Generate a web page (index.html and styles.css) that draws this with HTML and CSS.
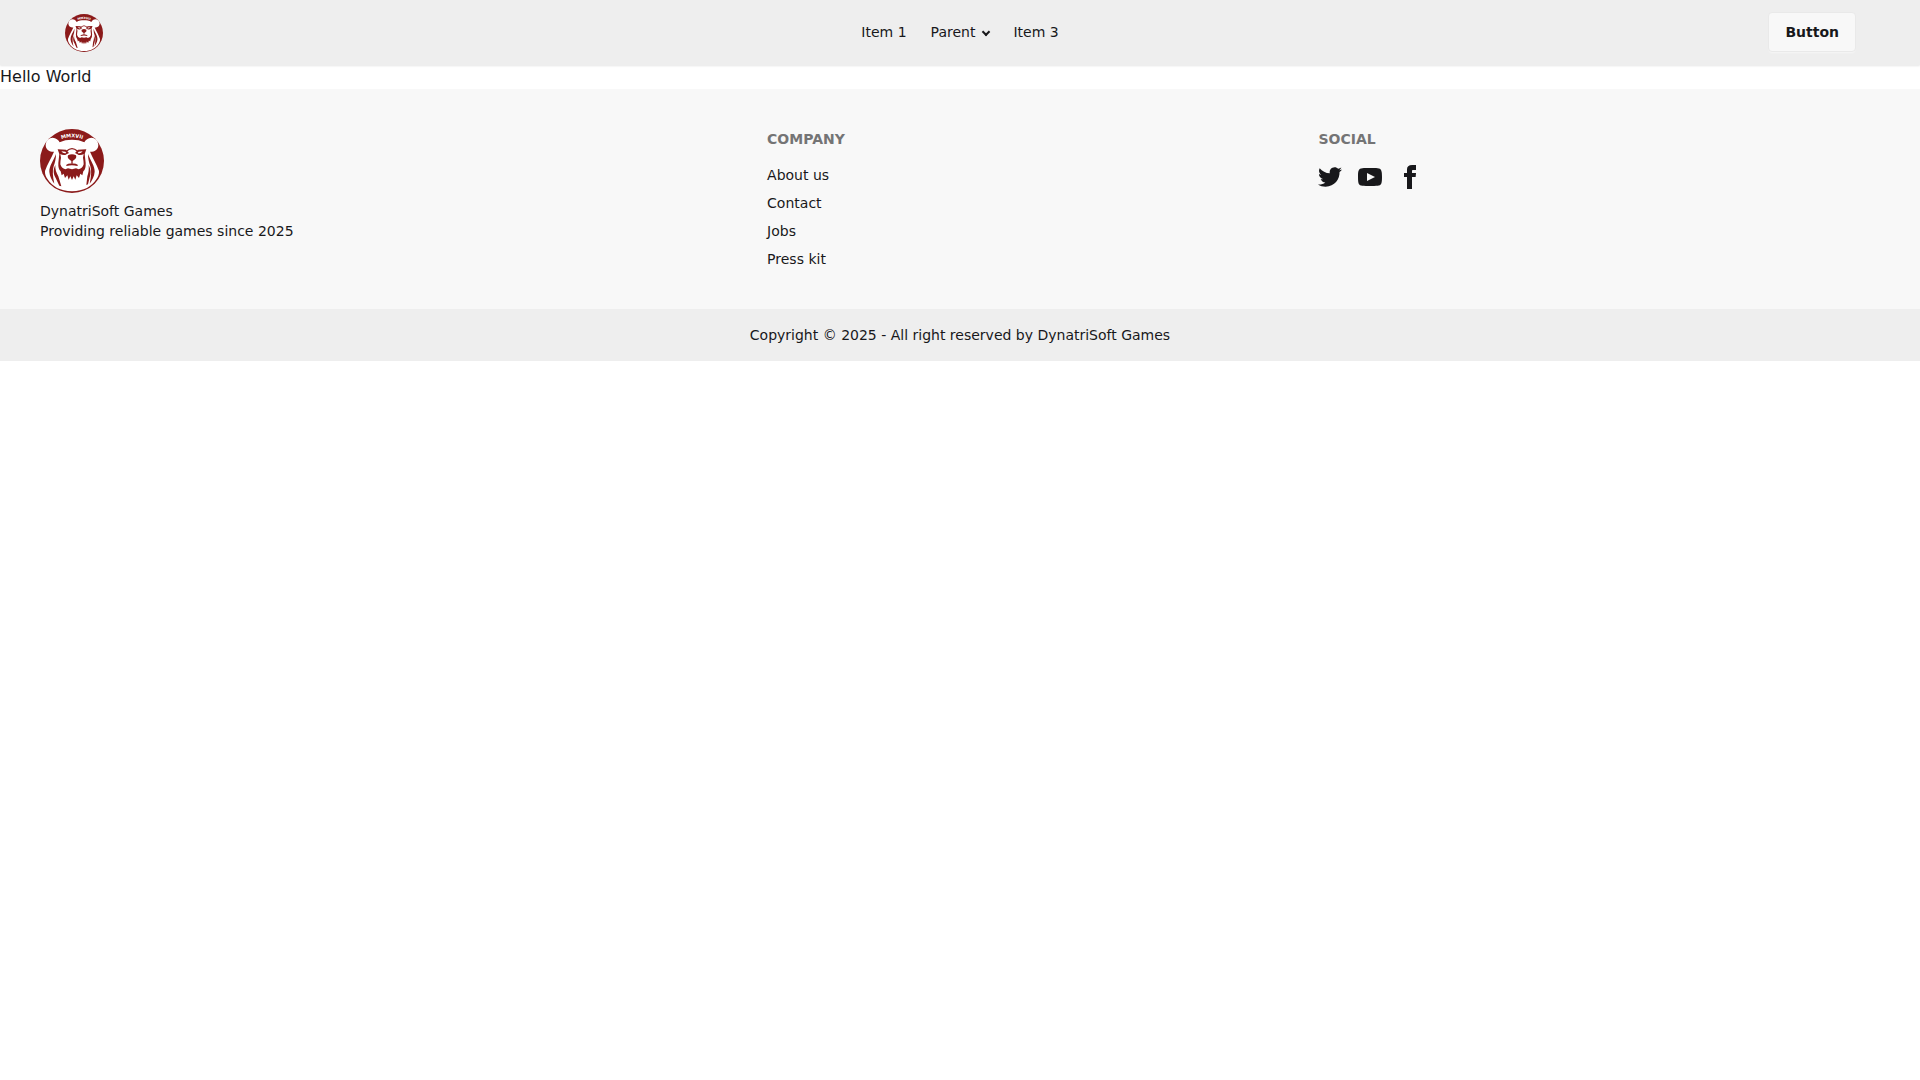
FILE: index.html
```html
<!DOCTYPE html>
<html lang="en">
<head>
<meta charset="utf-8">
<meta name="viewport" content="width=device-width, initial-scale=1">
<title>DynatriSoft Games</title>
<link rel="stylesheet" href="styles.css">
</head>
<body>

<!-- bear logo, shared by the navbar and the footer -->
<svg class="sprite" aria-hidden="true">
	<symbol id="bear" viewBox="0 0 192 192">
		<circle cx="96" cy="96" r="96" fill="#8b1a1a"/>
		<path fill="#fff" d="M36 68C24 67 17 58 17 48C18 35 27 26 38 26C48 27 55 32 59 40C70 34 82 32 96 32S122 34 133 40C137 32 144 27 154 26C165 26 174 35 175 48C175 58 168 67 156 68L150 68C158 88 170 104 177 126C178 135 174 144 169 151C156 172 131 187 96 187S36 172 23 151C18 144 14 135 15 126C22 104 34 88 42 68Z"/>
		<g fill="#8b1a1a">
			<path d="M48 75C40 96 27 112 28 128C29 142 36 154 43 164C38 142 37 124 41 112C45 100 48 90 48 75Z"/>
			<path d="M46 108C38 124 41 136 47 147L58 170L64 172L55 142C49 130 45 122 46 108Z"/>
			<path d="M144 75C152 96 165 112 164 128C163 142 156 154 149 164C154 142 155 124 151 112C147 100 144 90 144 75Z"/>
			<path d="M146 108C154 124 152 136 149 145L144 166L139 168L142 142C146 130 147 122 146 108Z"/>
			<path d="M53 61L78 62L87 72L81 75L76 78Q66 79 61 75L63 86Q61 96 61 106Q64 118 76 121L84 118Q96 123 108 118L116 121Q128 118 131 106Q131 96 129 86L131 75Q126 79 116 78L111 75L105 72L114 62L139 61L134 75L137 102Q138 120 130 127L127 139L121 134L117 147L110 139L106 152L101 142L96 153L91 142L86 152L82 139L75 147L71 134L65 139L62 127Q54 120 55 102L58 75Z"/>
			<path d="M84 79Q96 73 108 79Q111 87 103 92L98 96V104Q106 103 114 108L112 111Q96 106 80 111L78 108Q86 103 94 104V96L89 92Q81 87 84 79Z"/>
		</g>
		<path fill="none" stroke="#8b1a1a" stroke-width="4" d="M80 66Q96 52 112 66"/>
		<path fill="#fff" d="M64 67L76 68L79 72Q70 75 64 67ZM128 67L116 68L113 72Q122 75 128 67Z"/>
		<path id="arc" fill="none" d="M36 44Q96 6 156 44"/>
		<text class="logo-year"><textPath href="#arc" startOffset="50%">MMXVII</textPath></text>
	</symbol>
</svg>

<header class="navbar">
	<a class="navbar-logo" href="#" aria-label="DynatriSoft Games">
		<svg width="38" height="38" aria-hidden="true"><use href="#bear"/></svg>
	</a>
	<nav class="menu">
		<a href="#">Item 1</a>
		<button type="button" class="menu-parent">Parent <span class="chevron"></span></button>
		<a href="#">Item 3</a>
	</nav>
	<button type="button" class="btn">Button</button>
</header>

<main>Hello World</main>

<footer>
	<div class="footer">
		<div class="footer-col">
			<svg width="64" height="64" role="img" aria-label="DynatriSoft Games"><use href="#bear"/></svg>
			<p>DynatriSoft Games<br>Providing reliable games since 2025</p>
		</div>
		<nav class="footer-col">
			<h6>Company</h6>
			<a href="#">About us</a>
			<a href="#">Contact</a>
			<a href="#">Jobs</a>
			<a href="#">Press kit</a>
		</nav>
		<nav class="footer-col">
			<h6>Social</h6>
			<div class="social">
				<a href="#" aria-label="Twitter">
					<svg width="24" height="24" viewBox="0 0 24 24"><path d="M24 4.557c-.883.392-1.832.656-2.828.775 1.017-.609 1.798-1.574 2.165-2.724-.951.564-2.005.974-3.127 1.195-.897-.957-2.178-1.555-3.594-1.555-3.179 0-5.515 2.966-4.797 6.045-4.091-.205-7.719-2.165-10.148-5.144-1.29 2.213-.669 5.108 1.523 6.574-.806-.026-1.566-.247-2.229-.616-.054 2.281 1.581 4.415 3.949 4.89-.693.188-1.452.232-2.224.084.626 1.956 2.444 3.379 4.6 3.419-2.07 1.623-4.678 2.348-7.29 2.04 2.179 1.397 4.768 2.212 7.548 2.212 9.142 0 14.307-7.721 13.995-14.646.962-.695 1.797-1.562 2.457-2.549z"/></svg>
				</a>
				<a href="#" aria-label="YouTube">
					<svg width="24" height="24" viewBox="0 0 24 24"><path d="M19.615 3.184c-3.604-.246-11.631-.245-15.23 0-3.897.266-4.356 2.62-4.385 8.816.029 6.185.484 8.549 4.385 8.816 3.6.245 11.626.246 15.23 0 3.897-.266 4.356-2.62 4.385-8.816-.029-6.185-.484-8.549-4.385-8.816zm-10.615 12.816v-8l8 3.993-8 4.007z"/></svg>
				</a>
				<a href="#" aria-label="Facebook">
					<svg width="24" height="24" viewBox="0 0 24 24"><path d="M9 8h-3v4h3v12h5v-12h3.642l.358-4h-4v-1.667c0-.955.192-1.333 1.115-1.333h2.885v-5h-3.808c-3.596 0-5.192 1.583-5.192 4.615v3.385z"/></svg>
				</a>
			</div>
		</nav>
	</div>
	<div class="copyright">
		<p>Copyright © 2025 - All right reserved by DynatriSoft Games</p>
	</div>
</footer>

</body>
</html>
```
FILE: styles.css
```css
body {
	margin: 0;
	background: #fff;
	color: #18181b;
	font: 16px/24px "DejaVu Sans", sans-serif;
}

a {
	color: inherit;
	text-decoration: none;
}

a:hover {
	text-decoration: underline;
}

p, h6 {
	margin: 0;
}

svg {
	display: block;
	fill: currentColor;
}

.sprite {
	position: absolute;
	width: 0;
	height: 0;
}

.logo-year {
	fill: #fff;
	font: bold 15px "DejaVu Sans", sans-serif;
	text-anchor: middle;
}

.navbar {
	position: relative;
	display: grid;
	grid-template-columns: 1fr auto 1fr;
	align-items: center;
	box-sizing: border-box;
	min-height: 65px;
	padding: 0 64px 1px;
	background: #eee;
	box-shadow: 0 1px 2px rgba(0, 0, 0, .1);
	font-size: 14px;
	line-height: 20px;
}

.navbar-logo {
	justify-self: start;
	padding: 2px 0 0 1px;
}

.menu {
	display: flex;
}

.menu a,
.menu-parent {
	padding: 6px 12px;
}

.menu-parent {
	display: flex;
	align-items: center;
	gap: 8px;
	border: 0;
	background: none;
	color: inherit;
	font: inherit;
	cursor: pointer;
}

.chevron {
	width: 4px;
	height: 4px;
	border: solid;
	border-width: 0 2px 2px 0;
	transform: rotate(45deg);
}

.btn {
	justify-self: end;
	height: 40px;
	padding: 0 16px;
	border: 1px solid #e9e9e9;
	border-radius: 4px;
	background: #f8f8f8;
	box-shadow: 0 2px 2px -1px rgba(255, 255, 255, .5);
	color: inherit;
	font: bold 14px/20px "DejaVu Sans", sans-serif;
	cursor: pointer;
}

.footer {
	display: grid;
	grid-auto-flow: column;
	column-gap: 16px;
	padding: 40px;
	background: #f8f8f8;
	font-size: 14px;
	line-height: 20px;
}

.footer-col {
	display: grid;
	place-items: start;
	align-content: start;
	gap: 8px;
}

h6 {
	margin-bottom: 8px;
	color: #747475;
	font-size: 14px;
	text-transform: uppercase;
}

.social {
	display: flex;
	gap: 16px;
}

.copyright {
	padding: 16px;
	background: #eee;
	font-size: 14px;
	line-height: 20px;
	text-align: center;
}
```
